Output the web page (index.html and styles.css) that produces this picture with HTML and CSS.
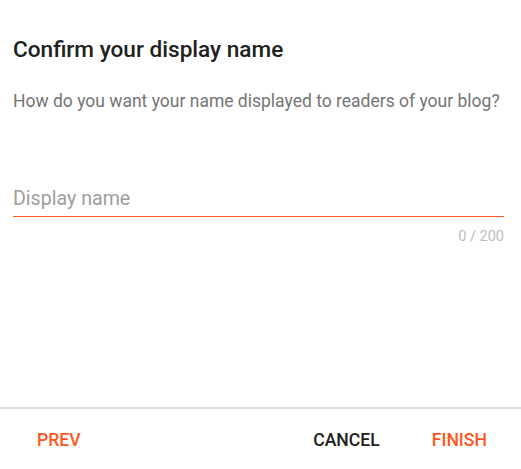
FILE: index.html
```html
<!DOCTYPE html>
<html>
<head>
<meta charset="utf-8">
<link rel="stylesheet" href="styles.css">
</head>
<body>
<div class="dialog">
  <div class="content">
    <h1 class="title">Confirm your display name</h1>
    <p class="subtitle">How do you want your name displayed to readers of your blog?</p>
    <div class="field">
      <div class="input">Display name</div>
      <div class="counter">0 / 200</div>
    </div>
  </div>
  <div class="actions">
    <button class="btn accent">PREV</button>
    <div class="spacer"></div>
    <button class="btn dark">CANCEL</button>
    <button class="btn accent">FINISH</button>
  </div>
</div>
</body>
</html>
```
FILE: styles.css
```css
html, body {
  margin: 0;
  padding: 0;
  background: #fff;
}
body {
  font-family: Roboto, "Liberation Sans", sans-serif;
  width: 521px;
  height: 469px;
}
.dialog {
  display: flex;
  flex-direction: column;
  height: 469px;
}
.content {
  flex: 1;
  padding: 0 17px 0 13px;
}
.title {
  margin: 37px 0 0;
  font-size: 22.6px;
  font-weight: 500;
  color: #212121;
  line-height: 26px;
}
.subtitle {
  margin: 27px 0 0;
  font-size: 17.5px;
  color: #757575;
  line-height: 22px;
}
.field {
  margin-top: 74px;
}
.input {
  font-size: 19.6px;
  color: #9e9e9e;
  line-height: 26px;
  padding-bottom: 4px;
  border-bottom: 1px solid #ff5722;
}
.counter {
  text-align: right;
  font-size: 14.5px;
  color: #bdbdbd;
  margin-top: 11px;
  line-height: 18px;
}
.actions {
  display: flex;
  align-items: center;
  border-top: 2px solid #e0e0e0;
  height: 60px;
  padding: 0 8px 0 11px;
}
.spacer { flex: 1; }
.btn {
  background: none;
  border: 0;
  font-family: Roboto, "Liberation Sans", sans-serif;
  font-size: 17.6px;
  font-weight: 500;
  padding: 0 26px;
  height: 38px;
  margin-top: 2px;
}
.accent { color: #ff5722; }
.dark { color: #212121; }
```
